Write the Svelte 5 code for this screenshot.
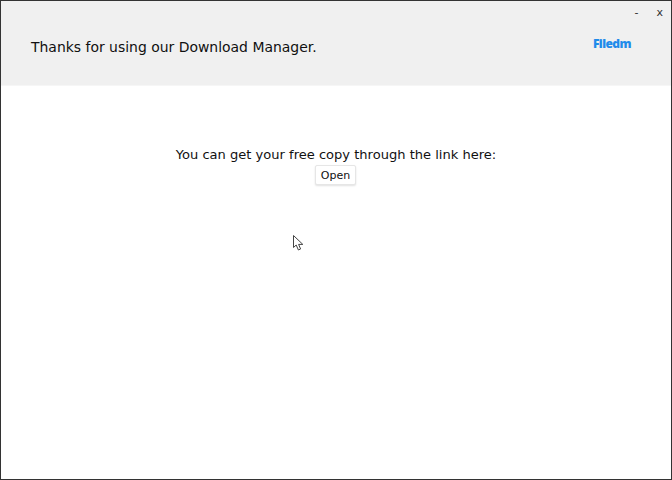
<script>
  let title = 'Thanks for using our Download Manager.';
  let message = 'You can get your free copy through the link here:';
</script>

<div class="window">
  <header class="header">
    <div class="controls">
      <span class="ctrl minimize">-</span>
      <span class="ctrl close">x</span>
    </div>
    <div class="header-row">
      <h1 class="title">{title}</h1>
      <span class="logo">Filedm</span>
    </div>
  </header>

  <main class="content">
    <p class="message">{message}</p>
    <button class="open">Open</button>
  </main>

  <svg class="cursor" width="12" height="16" viewBox="0 0 12 16">
    <path d="M0.5 0.5 L0.5 12.5 L3.2 10 L5.4 15 L7.6 14 L5.6 9.4 L9.8 9.4 Z" fill="#fff" stroke="#444" stroke-width="1" stroke-linejoin="round" />
  </svg>
</div>

<style>
  :global(body) {
    margin: 0;
    background: #fff;
  }

  .window {
    position: relative;
    box-sizing: border-box;
    width: 672px;
    height: 480px;
    border: 1px solid #333;
    background: #fff;
    font-family: "DejaVu Sans", Verdana, sans-serif;
    color: #111;
    overflow: hidden;
  }

  .header {
    height: 84px;
    background: #f0f0f0;
    border-bottom: 1px solid #f6f6f6;
    display: flex;
    flex-direction: column;
  }

  .controls {
    display: flex;
    justify-content: flex-end;
    align-items: center;
    gap: 18px;
    padding: 3px 8px 0 0;
    height: 17px;
    font-size: 11px;
    line-height: 14px;
    color: #333;
  }

  .header-row {
    display: flex;
    align-items: center;
    justify-content: space-between;
    padding: 8px 40px 0 30px;
  }

  .title {
    margin: 0;
    font-size: 13.95px;
    font-weight: 400;
    line-height: 36px;
  }

  .logo {
    font-family: "Open Sans", Arial, sans-serif;
    font-size: 12px;
    font-weight: 800;
    letter-spacing: -0.55px;
    color: #1f8bea;
    position: relative;
    top: -4px;
  }

  .content {
    display: flex;
    flex-direction: column;
    align-items: center;
    padding-top: 60px;
  }

  .message {
    margin: 0;
    font-size: 13.05px;
    line-height: 18px;
  }

  .open {
    margin: 1px 1px 0 0;
    width: 41px;
    height: 20px;
    padding: 0;
    font-family: inherit;
    font-size: 11px;
    color: #111;
    background: #fff;
    border: 1px solid #e6e6e6;
    border-radius: 2px;
    box-shadow: 0 1px 2px rgba(0, 0, 0, 0.12);
  }

  .cursor {
    position: absolute;
    left: 292px;
    top: 234px;
  }
</style>
